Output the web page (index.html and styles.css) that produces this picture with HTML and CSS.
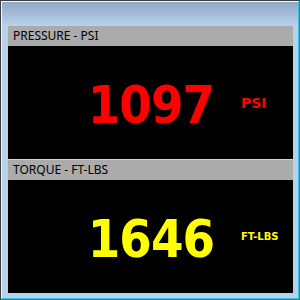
FILE: index.html
```html
<!DOCTYPE html>
<html lang="en">
<head>
  <meta charset="UTF-8" />
  <title>Gauges</title>
  <link rel="stylesheet" href="styles.css">
</head>
<body>
  <div class="ventana">
    <div class="marco">
      <div class="contenido">
        <section class="medidor">
          <div class="titulo">PRESSURE - PSI</div>
          <div class="lectura">
            <span class="valor rojo">1097</span>
            <span class="unidad rojo">PSI</span>
          </div>
        </section>
        <section class="medidor segundo">
          <div class="titulo">TORQUE - FT-LBS</div>
          <div class="lectura">
            <span class="valor amarillo">1646</span>
            <span class="unidad pequena amarillo">FT-LBS</span>
          </div>
        </section>
      </div>
    </div>
  </div>
</body>
</html>
```

FILE: styles.css
```css
html, body {
  margin: 0;
  padding: 0;
}

body {
  width: 300px;
  height: 300px;
  overflow: hidden;
  font-family: 'Noto Sans', 'Liberation Sans', sans-serif;
}

.ventana {
  width: 300px;
  height: 300px;
  box-sizing: border-box;
  border-top: 1px solid #3c3c3c;
  border-left: 1px solid #3c3c3c;
  border-right: 1px solid #6a6a6a;
  border-bottom: 1px solid #6a6a6a;
}

.marco {
  height: 100%;
  box-sizing: border-box;
  border-top: 1px solid #f4f8fc;
  border-left: 1px solid #f4f8fc;
  border-right: 1px solid #3cc4f0;
  border-bottom: 1px solid #3cc4f0;
  padding: 24px 5px 5px 6px;
  background: linear-gradient(#8eaac8, #b9d1ea 24px);
}

.contenido {
  display: flex;
  flex-direction: column;
  height: 100%;
}

.medidor {
  flex: 1;
  display: flex;
  flex-direction: column;
}

.medidor.segundo {
  border-top: 1px solid #d4d4d4;
}

.titulo {
  height: 20px;
  line-height: 20px;
  background-color: #ababab;
  color: #000;
  font-size: 12px;
  padding-left: 5px;
}

.lectura {
  flex: 1;
  background-color: #000;
  display: grid;
  grid-template-columns: 1fr 52px;
  column-gap: 27px;
  align-items: center;
}

.valor {
  justify-self: end;
  font-family: 'DejaVu Sans Condensed', 'DejaVu Sans', sans-serif;
  font-weight: bold;
  font-size: 52px;
  letter-spacing: -1px;
  line-height: 1;
  padding-top: 4px;
}

.unidad {
  font-family: 'DejaVu Sans', sans-serif;
  font-weight: bold;
  font-size: 14px;
}

.unidad.pequena {
  font-size: 10px;
}

.rojo {
  color: #ff0000;
}

.amarillo {
  color: #ffff00;
}
```
